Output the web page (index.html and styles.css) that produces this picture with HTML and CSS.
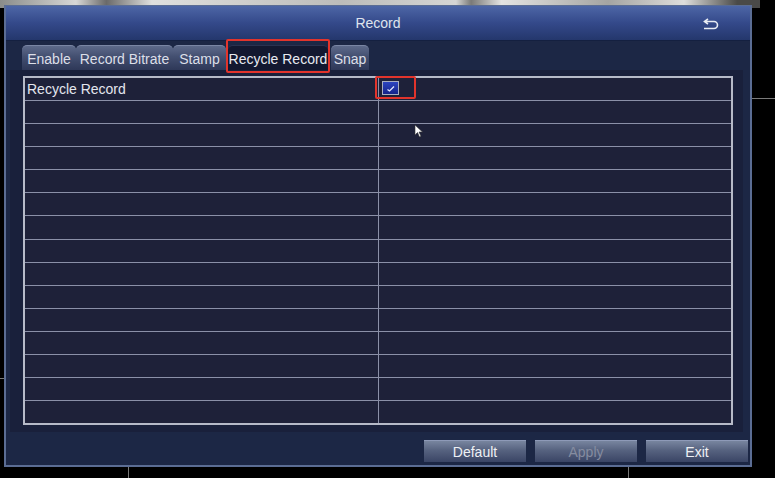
FILE: index.html
```html
<!DOCTYPE html>
<html lang="en">
<head>
    <meta charset="UTF-8">
    <title>Record</title>
    <link rel="stylesheet" href="styles.css">
</head>
<body>
    <div class="camera-strip"></div>
    <div class="grid-line line-a"></div>
    <div class="grid-line line-b"></div>
    <div class="grid-line line-c"></div>
    <div class="grid-line line-d"></div>

    <div class="window">
        <div class="titlebar">
            <span class="title">Record</span>
            <svg class="back-icon" width="18" height="14" viewBox="0 0 18 14">
                <path d="M6 2 L2.5 4.5 L6 7" fill="none" stroke="#e8ecf4" stroke-width="1.6"/>
                <path d="M3 4.5 H12 A3.5 3.5 0 0 1 12 11.5 H2" fill="none" stroke="#e8ecf4" stroke-width="1.6"/>
            </svg>
        </div>

        <div class="content">
            <div class="tabs">
                <div class="tab tab-enable">Enable</div>
                <div class="tab tab-bitrate">Record Bitrate</div>
                <div class="tab tab-stamp">Stamp</div>
                <div class="tab tab-recycle active">Recycle Record</div>
                <div class="tab tab-snap">Snap</div>
            </div>

            <div class="panel">
                <table class="grid">
                    <tr>
                        <td class="label">Recycle Record</td>
                        <td class="value">
                            <span class="check-wrap">
                                <span class="checkbox">
                                    <svg width="13" height="10" viewBox="0 0 13 10">
                                        <path d="M3.5 6.5 L5.5 8 L10 3.5" fill="none" stroke="#dfe6ff" stroke-width="1.3"/>
                                    </svg>
                                </span>
                            </span>
                            <svg class="cursor" width="10" height="14" viewBox="0 0 10 14">
                                <path d="M1 1 L1 11 L3.5 8.5 L5.5 13 L7 12.3 L5 8 L8.5 8 Z" fill="#ffffff" stroke="#333" stroke-width="0.6"/>
                            </svg>
                        </td>
                    </tr>
                    <tr><td></td><td></td></tr>
                    <tr><td></td><td></td></tr>
                    <tr><td></td><td></td></tr>
                    <tr><td></td><td></td></tr>
                    <tr><td></td><td></td></tr>
                    <tr><td></td><td></td></tr>
                    <tr><td></td><td></td></tr>
                    <tr><td></td><td></td></tr>
                    <tr><td></td><td></td></tr>
                    <tr><td></td><td></td></tr>
                    <tr><td></td><td></td></tr>
                    <tr><td></td><td></td></tr>
                    <tr><td></td><td></td></tr>
                    <tr><td></td><td></td></tr>
                </table>
            </div>

            <div class="buttons">
                <button class="btn">Default</button>
                <button class="btn disabled">Apply</button>
                <button class="btn">Exit</button>
            </div>
        </div>
    </div>
</body>
</html>
```

FILE: styles.css
```css
body {
    margin: 0;
    width: 775px;
    height: 478px;
    overflow: hidden;
    background-color: #000;
    font-family: 'Liberation Sans', Arial, sans-serif;
    position: relative;
    padding: 5px 0 0 4px;
    box-sizing: border-box;
}

.camera-strip {
    position: absolute;
    left: 0;
    top: 0;
    width: 760px;
    height: 8px;
    background: linear-gradient(90deg, #8a8c8a 0%, #d8d8d6 10%, #6a6a6a 14%, #e0e0de 20%, #bcbcba 45%, #d6d6d4 60%, #7a7a78 62%, #e4e4e2 66%, #a4a4a2 80%, #dededc 90%, #4a4a48 97%);
}

.grid-line {
    position: absolute;
    background-color: #7a7a7a;
}

.line-a { left: 128px; top: 460px; width: 1px; height: 18px; }
.line-b { left: 628px; top: 460px; width: 1px; height: 18px; }
.line-c { left: 750px; top: 98px; width: 25px; height: 1px; }
.line-d { left: 0; top: 378px; width: 6px; height: 1px; }

.window {
    position: relative;
    width: 748px;
    height: 462px;
    box-sizing: border-box;
    border: 2px solid #5b6d94;
    border-top-width: 1px;
    background-color: #1c2745;
}

.titlebar {
    height: 34px;
    background: linear-gradient(180deg, #4d66a6 0%, #34498a 50%, #24376c 100%);
    border-bottom: 1px solid #142040;
    display: flex;
    align-items: center;
    justify-content: center;
    position: relative;
}

.title {
    color: #dfe4ee;
    font-size: 14px;
}

.back-icon {
    position: absolute;
    right: 30px;
    top: 11px;
}

.content {
    padding: 3px 7px 0 4px;
}

.tabs {
    display: flex;
    height: 26px;
    padding-left: 12px;
    align-items: flex-end;
}

.tab {
    height: 25px;
    line-height: 27px;
    box-sizing: border-box;
    color: #dcdfe8;
    font-size: 14px;
    text-align: center;
    border-radius: 5px 5px 0 0;
    background: linear-gradient(180deg, #5d6a8a 0%, #434f70 45%, #2e3858 100%);
    border-top: 1px solid #7a86a4;
    white-space: nowrap;
    overflow: hidden;
}

.tab-enable { width: 54px; }
.tab-bitrate { width: 97px; }
.tab-stamp { width: 53px; margin-right: 2px; }
.tab-recycle { width: 100px; margin-right: 3px; }
.tab-snap { width: 38px; }

.tab.active {
    background: #131830;
    border-top-color: #2a3250;
    position: relative;
    overflow: visible;
    color: #e8eaf0;
}

.tab.active::after {
    content: '';
    position: absolute;
    left: -2px;
    right: -2px;
    top: -7px;
    bottom: -3px;
    border: 2px solid #e2342c;
    border-radius: 2px;
}

.panel {
    background-color: #19203b;
    padding: 6px 10px 7px 13px;
}

.grid {
    width: 710px;
    border-collapse: collapse;
    border: 2px solid #b6bac8;
    background-color: #1e2139;
    table-layout: fixed;
}

.grid td {
    height: 22px;
    padding: 0;
    border-top: 1px solid #8b90a8;
    border-bottom: 1px solid #8b90a8;
}

.grid tr {
    height: 23.1px;
}

.grid td:first-child {
    width: 351px;
    border-right: 1px solid #8b90a8;
}

.label {
    color: #e4e6ee;
    font-size: 14px;
    padding-left: 2px !important;
}

.value {
    position: relative;
}

.check-wrap {
    position: absolute;
    left: -4px;
    top: -2px;
    width: 37px;
    height: 19px;
    border: 2px solid #e2342c;
    border-radius: 2px;
}

.checkbox {
    position: absolute;
    left: 5px;
    top: 3px;
    width: 15px;
    height: 12px;
    border: 1px solid #a8aec0;
    background: linear-gradient(180deg, #2c44c0 0%, #15238a 100%);
    display: flex;
    align-items: center;
    justify-content: center;
}

.cursor {
    position: absolute;
    left: 35px;
    top: 46px;
}

.buttons {
    display: flex;
    justify-content: flex-end;
    gap: 9px;
    padding-top: 8px;
    margin-right: -5px;
}

.btn {
    width: 102px;
    height: 22px;
    border: none;
    border-top: 1px solid #8e9ab8;
    background: linear-gradient(180deg, #78859f 0%, #56627f 45%, #3a4565 100%);
    color: #eef0f4;
    font-family: 'Liberation Sans', Arial, sans-serif;
    font-size: 14px;
    padding: 0;
}

.btn.disabled {
    color: #858ca0;
}
```
